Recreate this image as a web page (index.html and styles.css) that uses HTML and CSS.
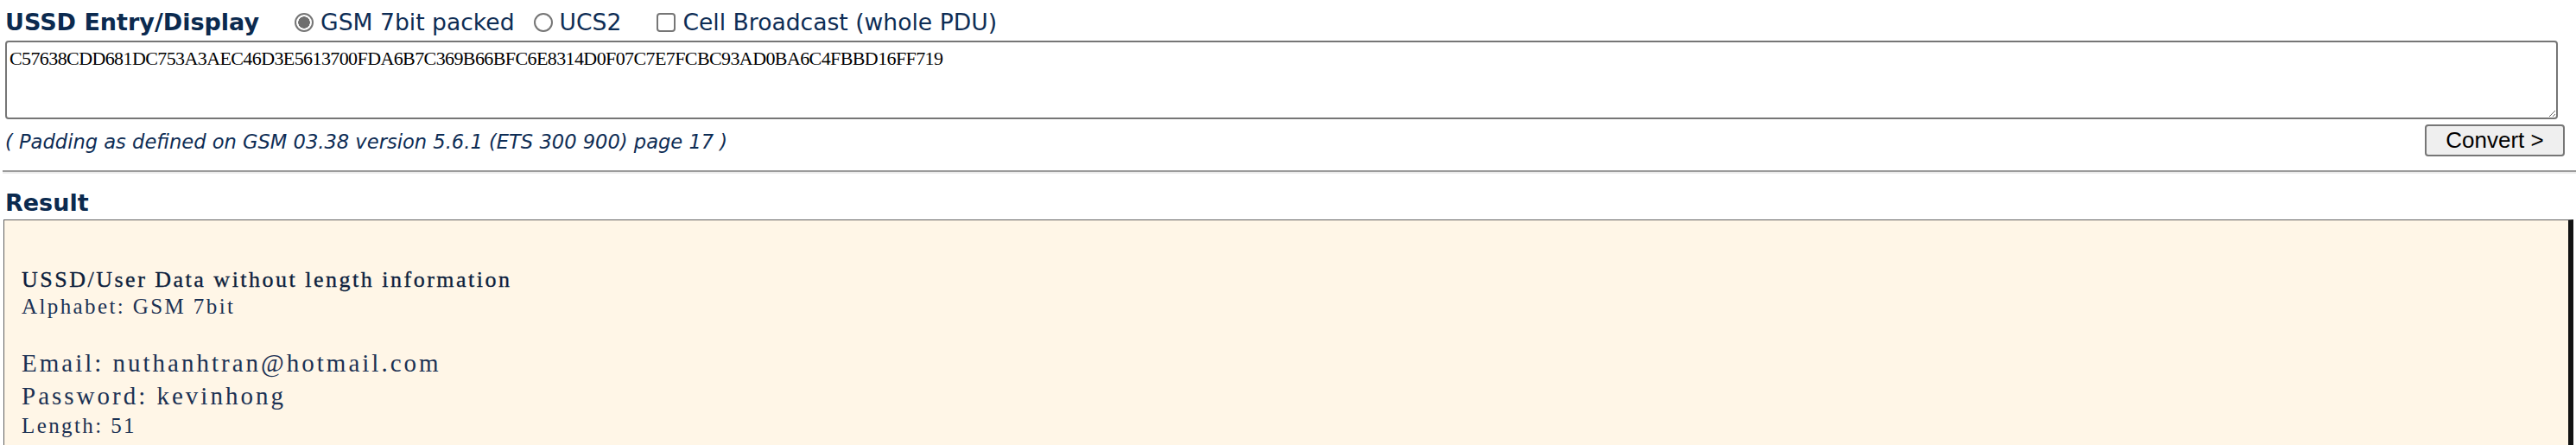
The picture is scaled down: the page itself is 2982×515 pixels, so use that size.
FILE: index.html
```html
<!DOCTYPE html>
<html lang="en">
<head>
<meta charset="utf-8">
<title>USSD Entry/Display</title>
<link rel="stylesheet" href="styles.css">
</head>
<body>
<form class="entry">
  <div class="topbar">
    <h2 class="title">USSD Entry/Display</h2>
    <label class="opt opt-first"><input type="radio" name="enc" checked><span>GSM 7bit packed</span></label>
    <label class="opt opt-second"><input type="radio" name="enc"><span>UCS2</span></label>
    <label class="opt opt-third"><input type="checkbox" name="cb"><span>Cell Broadcast (whole PDU)</span></label>
  </div>
  <textarea class="pdu" spellcheck="false">C57638CDD681DC753A3AEC46D3E5613700FDA6B7C369B66BFC6E8314D0F07C7E7FCBC93AD0BA6C4FBBD16FF719</textarea>
  <div class="actions">
    <p class="note">( Padding as defined on GSM 03.38 version 5.6.1 (ETS 300 900) page 17 )</p>
    <button type="button" class="convert">Convert &gt;</button>
  </div>
</form>
<hr class="divider">
<h2 class="title result-title">Result</h2>
<div class="result">
  <div class="r-head">USSD/User Data without length information</div>
  <div class="r-meta">Alphabet: GSM 7bit</div>
  <div class="r-gap"></div>
  <div class="r-big">Email: nuthanhtran@hotmail.com</div>
  <div class="r-big">Password: kevinhong</div>
  <div class="r-meta">Length: 51</div>
</div>
</body>
</html>
```

FILE: styles.css
```css
html, body {
  margin: 0;
  padding: 0;
  background: #ffffff;
}

body {
  width: 2982px;
  height: 515px;
  overflow: hidden;
  font-family: "DejaVu Sans", Verdana, sans-serif;
  color: #0c2a50;
}

.entry {
  margin: 0;
  padding: 0 21px 0 6px;
}

.topbar {
  display: flex;
  align-items: center;
  padding-top: 10px;
  height: 31px;
}

.title {
  margin: 0;
  font-family: "DejaVu Sans", Verdana, sans-serif;
  font-weight: bold;
  font-size: 27px;
  line-height: 31px;
  color: #0b2a4f;
}

.opt {
  display: flex;
  align-items: center;
  gap: 8px;
  font-size: 26.6px;
  line-height: 31px;
  color: #0e2d55;
}

.opt-first { margin-left: 41px; }
.opt-second { margin-left: 22px; }
.opt-third { margin-left: 41px; }

.opt input {
  -webkit-appearance: none;
  appearance: none;
  margin: 0;
  width: 22px;
  height: 22px;
  border: 2px solid #767676;
  background: #ffffff;
  box-sizing: border-box;
  flex: none;
}

.opt input[type="radio"] {
  border-radius: 50%;
}

.opt input[type="radio"]:checked {
  background: radial-gradient(circle, #6f6f6f 0 6.5px, #ffffff 7px);
}

.opt input[type="checkbox"] {
  border-radius: 4px;
}

.pdu {
  display: block;
  box-sizing: border-box;
  margin: 6px 0 0 0;
  width: 2955px;
  height: 91px;
  border: 2px solid #767676;
  border-radius: 4px;
  padding: 6px 2px 2px 3px;
  font-family: "Liberation Serif", "Times New Roman", serif;
  font-size: 22px;
  letter-spacing: -0.6px;
  line-height: 26px;
  color: #000000;
  background: #ffffff;
  outline: none;
}

.actions {
  display: flex;
  justify-content: space-between;
  align-items: flex-start;
}

.note {
  margin: 13px 0 0 0;
  font-style: italic;
  font-size: 22.6px;
  line-height: 26px;
  color: #0e2d55;
}

.convert {
  margin: 6px -8px 0 0;
  width: 162px;
  height: 37px;
  box-sizing: border-box;
  border: 2px solid #767676;
  border-radius: 4px;
  background: #efefef;
  font-family: "Liberation Sans", Arial, sans-serif;
  font-size: 26px;
  color: #000000;
  padding: 0;
}

.divider {
  margin: 16px 0 0 3px;
  height: 0;
  border: 0;
  border-top: 2px solid #9c9c9c;
  border-bottom: 2px solid #ececec;
}

.result-title {
  margin: 18px 0 0 6px;
}

.result {
  margin: 4px 0 0 4px;
  width: 2975px;
  height: 300px;
  box-sizing: border-box;
  background: #fff6e7;
  border-top: 1px solid #5f5f5f;
  border-left: 1px solid #5f5f5f;
  border-right: 6px solid #121212;
  padding: 53px 0 0 20px;
  font-family: "Liberation Serif", "Times New Roman", serif;
  color: #1b3153;
}

.r-head {
  font-size: 26px;
  line-height: 31px;
  letter-spacing: 2.5px;
  color: #0d1f3d;
  -webkit-text-stroke: 0.35px #0d1f3d;
}

.r-meta {
  font-size: 25px;
  line-height: 31px;
  letter-spacing: 2.4px;
}

.r-gap {
  height: 31px;
}

.r-big {
  font-size: 29px;
  line-height: 38px;
  letter-spacing: 3px;
}
```
